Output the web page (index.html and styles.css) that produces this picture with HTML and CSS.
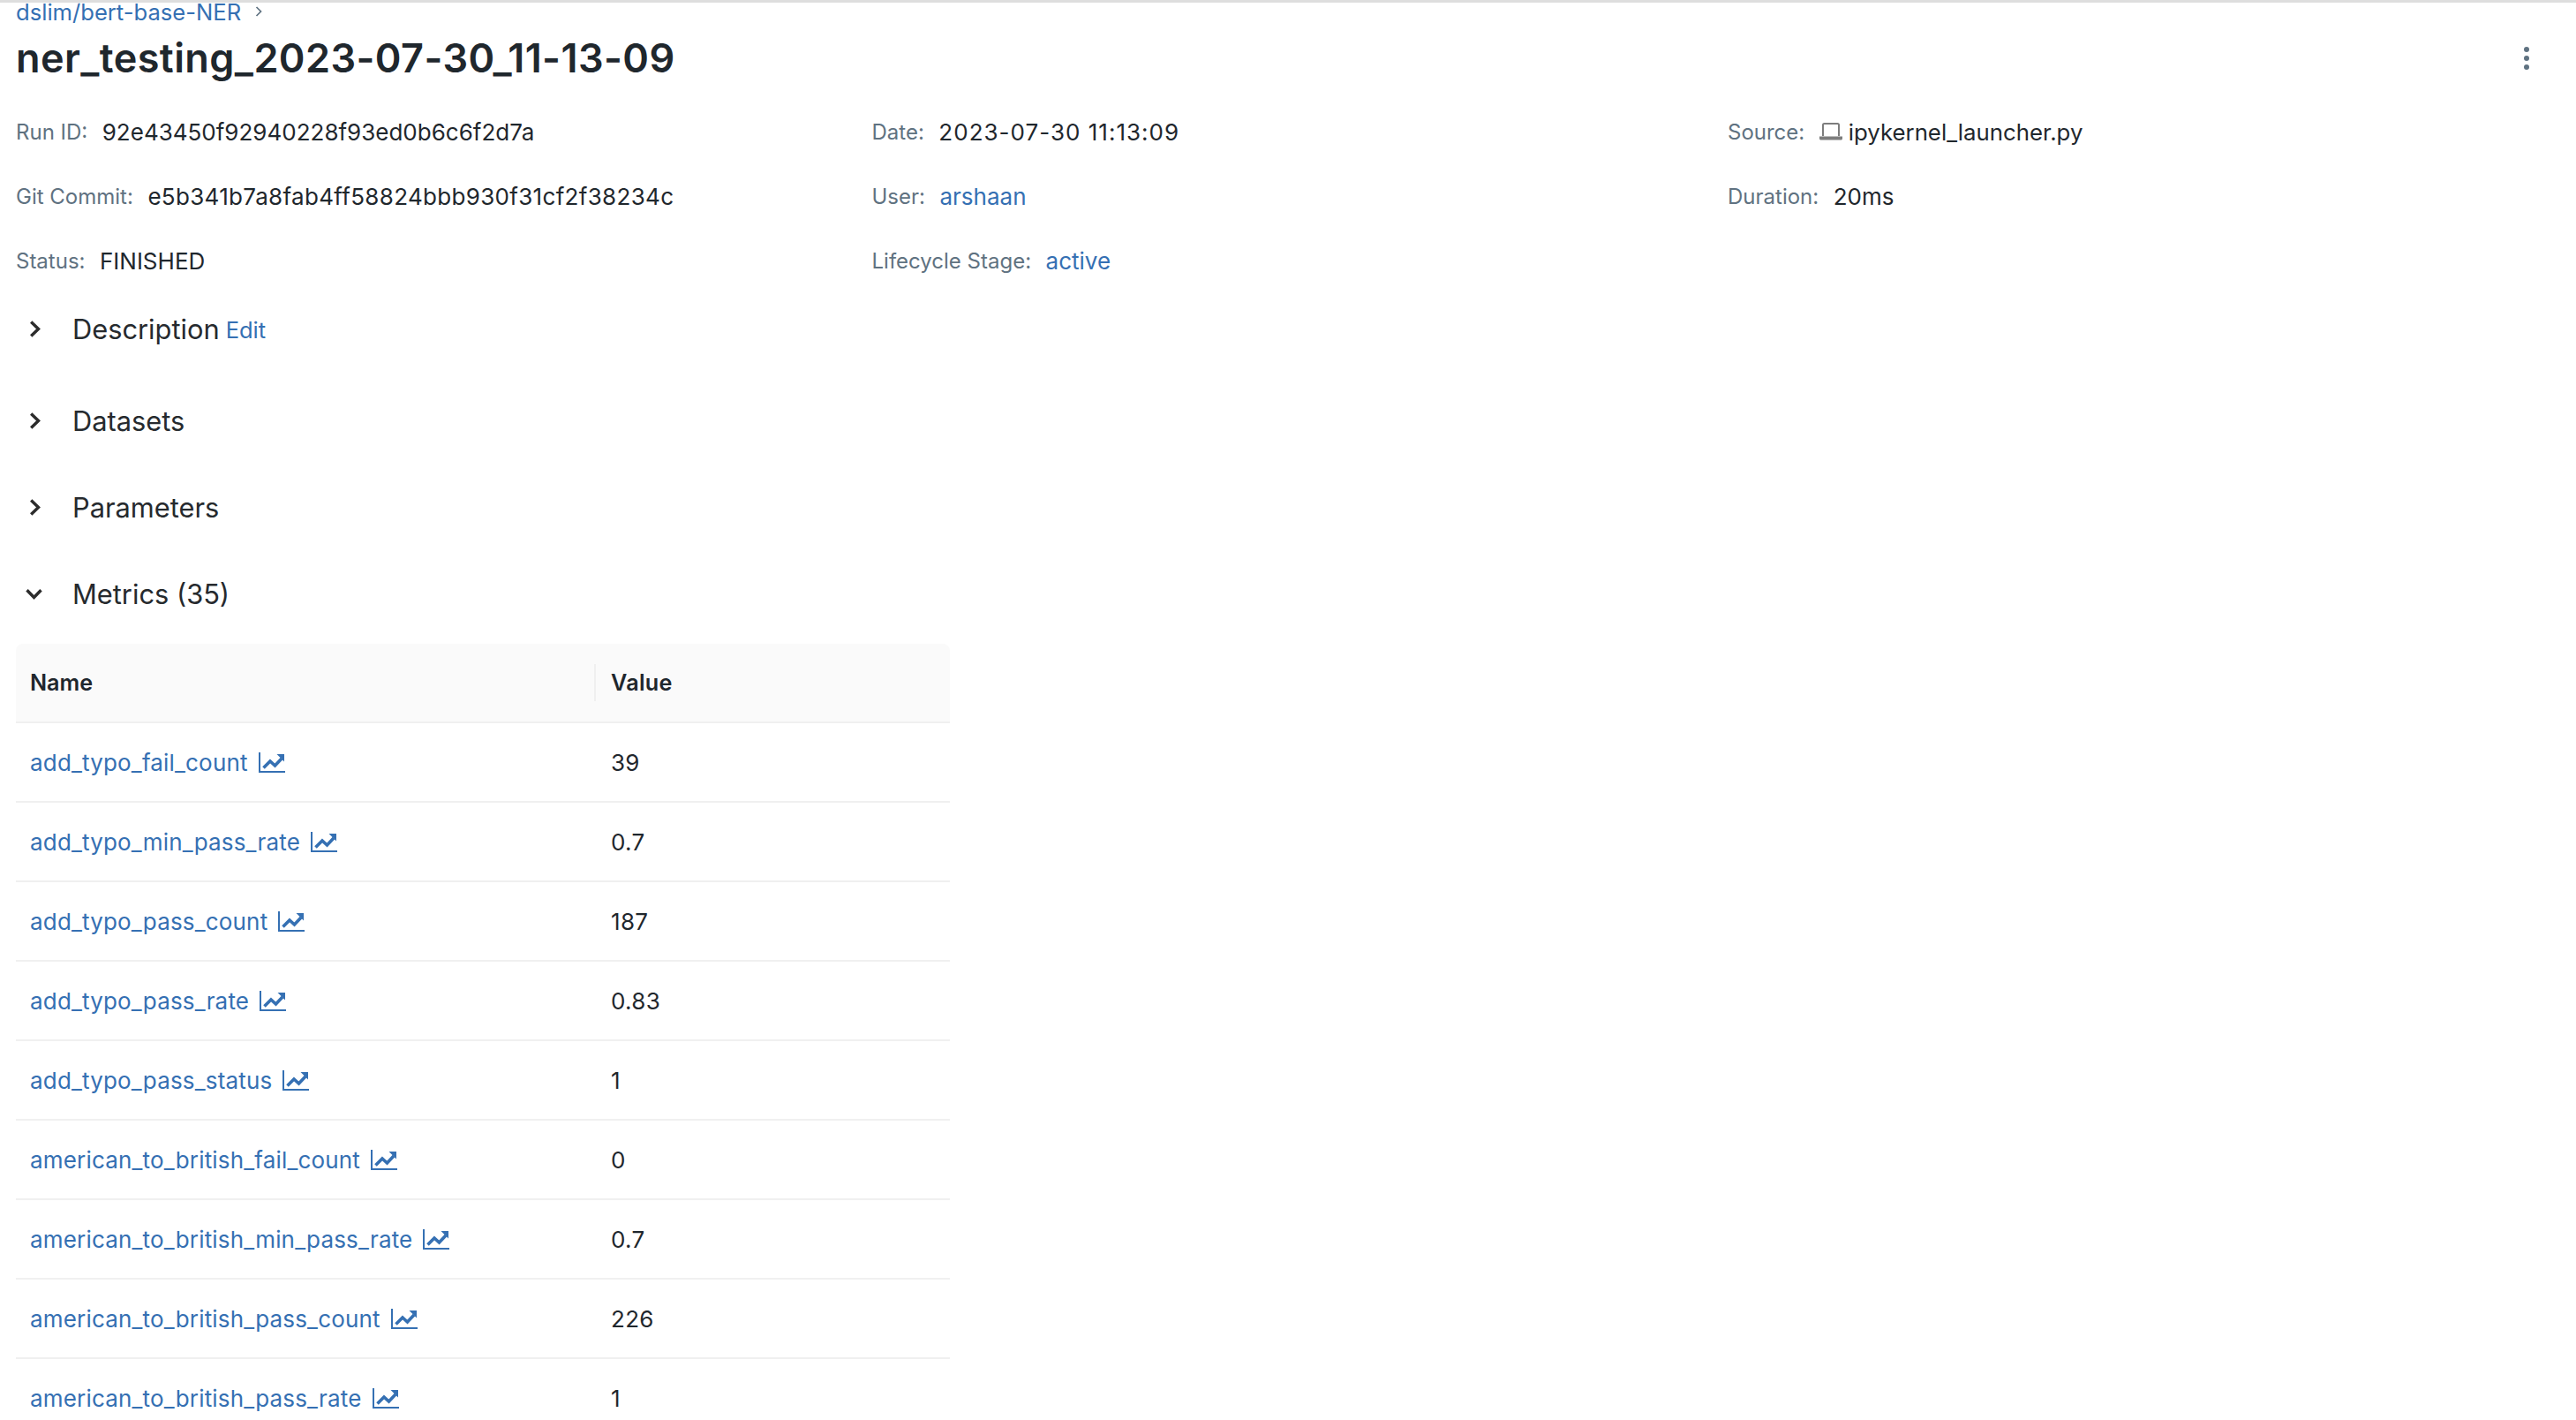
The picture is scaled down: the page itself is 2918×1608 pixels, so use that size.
FILE: index.html
```html
<!DOCTYPE html>
<html lang="en">
<head>
<meta charset="utf-8">
<title>ner_testing_2023-07-30_11-13-09</title>
<link rel="stylesheet" href="styles.css">
</head>
<body>
<svg width="0" height="0" class="defs" aria-hidden="true">
  <symbol id="chart" viewBox="0 0 30 23">
    <path d="M1 0V22H30" fill="none" stroke="currentColor" stroke-width="2"/>
    <path d="M5.5 17.5L13 10L18.5 15L26 7" fill="none" stroke="currentColor" stroke-width="3.6"/>
    <path d="M20.5 2H29V10.5Z" fill="currentColor"/>
  </symbol>
</svg>
<div class="page">
  <nav class="crumbs">
    <a class="link" href="#">dslim/bert-base-NER</a>
    <svg class="crumb-chevron" viewBox="0 0 8 12" width="8" height="12"><path d="M1.5 1L6.5 6L1.5 11" fill="none" stroke="#5f7281" stroke-width="1.7"/></svg>
  </nav>
  <header class="title-row">
    <h1 class="title">ner_testing_2023-07-30_11-13-09</h1>
    <button class="more" aria-label="More"><span class="dot"></span><span class="dot"></span><span class="dot"></span></button>
  </header>
  <section class="meta">
    <div class="meta-item"><span class="label">Run ID:</span><span class="value">92e43450f92940228f93ed0b6c6f2d7a</span></div>
    <div class="meta-item"><span class="label">Date:</span><span class="value date">2023-07-30 11:13:09</span></div>
    <div class="meta-item"><span class="label">Source:</span><svg class="laptop" viewBox="0 0 26 20" width="26" height="20"><path d="M4 15V2.5C4 1.7 4.7 1 5.5 1H20.5C21.3 1 22 1.7 22 2.5V15" fill="none" stroke="#7d7d7d" stroke-width="2"/><path d="M0 15.5H26V18C26 18.8 25.3 19.5 24.5 19.5H1.5C.7 19.5 0 18.8 0 18Z" fill="#7d7d7d"/></svg><span class="value source">ipykernel_launcher.py</span></div>
    <div class="meta-item"><span class="label">Git Commit:</span><span class="value commit">e5b341b7a8fab4ff58824bbb930f31cf2f38234c</span></div>
    <div class="meta-item"><span class="label">User:</span><a class="value link" href="#">arshaan</a></div>
    <div class="meta-item"><span class="label">Duration:</span><span class="value">20ms</span></div>
    <div class="meta-item"><span class="label">Status:</span><span class="value">FINISHED</span></div>
    <div class="meta-item"><span class="label">Lifecycle Stage:</span><a class="value link" href="#">active</a></div>
  </section>
  <section class="sections">
    <div class="section-head first">
      <svg class="chev" viewBox="0 0 13 19" width="13" height="19"><path d="M2.2 1.5L10.5 9.5L2.2 17.5" fill="none" stroke="#2c2c2c" stroke-width="3.4"/></svg>
      <h2 class="section-title">Description</h2><a class="edit link" href="#">Edit</a>
    </div>
    <div class="section-head">
      <svg class="chev" viewBox="0 0 13 19" width="13" height="19"><path d="M2.2 1.5L10.5 9.5L2.2 17.5" fill="none" stroke="#2c2c2c" stroke-width="3.4"/></svg>
      <h2 class="section-title">Datasets</h2>
    </div>
    <div class="section-head">
      <svg class="chev" viewBox="0 0 13 19" width="13" height="19"><path d="M2.2 1.5L10.5 9.5L2.2 17.5" fill="none" stroke="#2c2c2c" stroke-width="3.4"/></svg>
      <h2 class="section-title">Parameters</h2>
    </div>
    <div class="section-head">
      <svg class="chev down" viewBox="0 0 19 13" width="19" height="13"><path d="M1.5 2.2L9.5 10.5L17.5 2.2" fill="none" stroke="#2c2c2c" stroke-width="3.4"/></svg>
      <h2 class="section-title">Metrics (35)</h2>
    </div>
  </section>
  <div class="table">
    <div class="row head"><div class="cell name"><span>Name</span></div><div class="cell val"><span>Value</span></div></div>
    <div class="row"><div class="cell name"><a class="link metric" href="#">add_typo_fail_count</a><svg class="chart"><use href="#chart"/></svg></div><div class="cell val">39</div></div>
    <div class="row"><div class="cell name"><a class="link metric" href="#">add_typo_min_pass_rate</a><svg class="chart"><use href="#chart"/></svg></div><div class="cell val">0.7</div></div>
    <div class="row"><div class="cell name"><a class="link metric" href="#">add_typo_pass_count</a><svg class="chart"><use href="#chart"/></svg></div><div class="cell val">187</div></div>
    <div class="row"><div class="cell name"><a class="link metric" href="#">add_typo_pass_rate</a><svg class="chart"><use href="#chart"/></svg></div><div class="cell val">0.83</div></div>
    <div class="row"><div class="cell name"><a class="link metric" href="#">add_typo_pass_status</a><svg class="chart"><use href="#chart"/></svg></div><div class="cell val">1</div></div>
    <div class="row"><div class="cell name"><a class="link metric" href="#">american_to_british_fail_count</a><svg class="chart"><use href="#chart"/></svg></div><div class="cell val">0</div></div>
    <div class="row"><div class="cell name"><a class="link metric" href="#">american_to_british_min_pass_rate</a><svg class="chart"><use href="#chart"/></svg></div><div class="cell val">0.7</div></div>
    <div class="row"><div class="cell name"><a class="link metric" href="#">american_to_british_pass_count</a><svg class="chart"><use href="#chart"/></svg></div><div class="cell val">226</div></div>
    <div class="row"><div class="cell name"><a class="link metric" href="#">american_to_british_pass_rate</a><svg class="chart"><use href="#chart"/></svg></div><div class="cell val">1</div></div>
  </div>
</div>
</body>
</html>
```
FILE: styles.css
```css
* { box-sizing: border-box; }
html, body { margin: 0; height: 100%; overflow: hidden; background: #fff; }
body { font-family: Inter, "Liberation Sans", sans-serif; font-size: 26px; color: #1f272d; }
.defs { display: block; height: 0; }
.page { border-top: 3px solid #dedede; padding: 0 0 0 18px; }
.link { color: #3570b3; text-decoration: none; }
.crumbs { display: flex; align-items: center; height: 20px; font-size: 25.6px; gap: 16px; }
.crumb-chevron { flex: none; }
.title-row { display: flex; align-items: center; justify-content: space-between; height: 61px; margin-top: 12px; }
.title { margin: 0; font-size: 45px; font-weight: 600; line-height: 61px; letter-spacing: .42px; color: #1f272d; }
.more { display: flex; flex-direction: column; gap: 4px; padding: 0; margin-right: 53px; border: 0; background: none; }
.dot { width: 6px; height: 6px; border-radius: 50%; background: #5f7281; }
.meta { display: grid; grid-template-columns: repeat(3, 969.5px); grid-auto-rows: 36px; row-gap: 37px; margin-top: 35px; }
.meta-item { display: flex; align-items: center; }
.label { font-size: 24px; color: #5f7281; margin-right: 16.5px; }
.value { font-size: 26px; color: #1f272d; }
.value.link { color: #3570b3; }
.date { letter-spacing: 1.02px; }
.commit { letter-spacing: .32px; }
.source { font-size: 25.8px; }
.laptop { margin-right: 7px; flex: none; }
.sections { display: flex; flex-direction: column; gap: 38px; margin-top: 29px; }
.section-head { display: flex; align-items: center; height: 60px; }
.section-head.first { margin-bottom: 6px; }
.chev { margin-left: 15px; margin-right: 36px; flex: none; }
.chev.down { margin-left: 11px; margin-right: 34px; }
.section-title { margin: 0; font-size: 30.8px; font-weight: 400; color: #262a2e; }
.edit { font-size: 25.5px; margin-left: 7px; margin-top: 3px; }
.table { width: 1058px; margin-top: 27px; }
.row { display: flex; height: 90px; border-bottom: 2px solid #f0f0f0; font-size: 26px; }
.row.head { background: #fafafa; border-radius: 8px 8px 0 0; font-weight: 600; font-size: 25.2px; }
.cell { display: flex; align-items: center; }
.cell.name { width: 657px; padding-left: 16px; }
.cell.val { padding-left: 17px; letter-spacing: .3px; }
.head .cell.name { position: relative; }
.head .cell.name::after { content: ""; position: absolute; right: 0; top: 23px; height: 42px; width: 2px; background: #f0f0f0; }
.metric { letter-spacing: .18px; }
.chart { width: 30px; height: 23px; margin-left: 12px; color: #3570b3; flex: none; }
```
